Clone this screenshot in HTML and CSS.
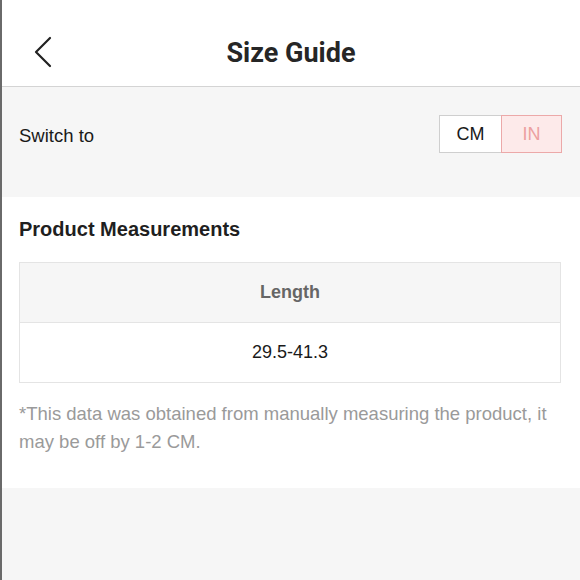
FILE: index.html
```html
<!DOCTYPE html>
<html>
<head>
<meta charset="utf-8">
<link rel="stylesheet" href="styles.css">
</head>
<body>
<div class="page">
  <header class="topbar">
    <span class="back">
      <svg width="20" height="32" viewBox="0 0 20 32"><path d="M17 2 L3 16 L17 30" fill="none" stroke="#222" stroke-width="2.2" stroke-linecap="round" stroke-linejoin="round"/></svg>
    </span>
    <h1 class="title">Size Guide</h1>
  </header>
  <section class="switch">
    <span class="switch-label">Switch to</span>
    <div class="toggle">
      <span class="opt">CM</span>
      <span class="opt active">IN</span>
    </div>
  </section>
  <section class="content">
    <h2 class="heading">Product Measurements</h2>
    <div class="table">
      <div class="th">Length</div>
      <div class="td">29.5-41.3</div>
    </div>
    <p class="note">*This data was obtained from manually measuring the product, it may be off by 1-2 CM.</p>
  </section>
  <div class="rest"></div>
</div>
</body>
</html>
```
FILE: styles.css
```css
html, body { margin: 0; padding: 0; }
body { background: #f6f6f6; font-family: "Liberation Sans", Arial, sans-serif; }
.page { border-left: 2px solid #6a6a6a; min-height: 580px; box-sizing: border-box; display: flex; flex-direction: column; }
.topbar { height: 86px; background: #fff; border-bottom: 1px solid #d4d4d4; display: flex; align-items: flex-start; justify-content: center; position: relative; }
.back { position: absolute; left: 31px; top: 36px; display: flex; }
.title { margin: 0; font-family: Roboto, "Liberation Sans", sans-serif; font-weight: 700; font-size: 27px; line-height: 32px; color: #262626; padding-top: 37px; }
.switch { height: 110px; background: #f6f6f6; display: flex; align-items: flex-start; justify-content: space-between; padding: 0 18px 0 17px; box-sizing: border-box; }
.switch-label { font-size: 18.5px; color: #1a1a1a; margin-top: 38px; }
.toggle { display: flex; margin-top: 28px; }
.opt { width: 60px; height: 36px; display: flex; align-items: center; justify-content: center; font-size: 18px; box-sizing: content-box; }
.opt:first-child { border: 1px solid #cfcfcf; border-right: none; background: #fff; color: #1a1a1a; width: 61px; }
.opt.active { border: 1px solid #eca9a9; background: #fdeaea; color: #eca0a0; width: 59px; }
.content { background: #fff; padding: 19px 19px 32px 17px; }
.heading { margin: 0; font-size: 20px; font-weight: 700; color: #1f1f1f; line-height: 26px; }
.table { margin-top: 20px; border: 1px solid #e4e4e4; }
.th { height: 59px; background: #f6f6f6; border-bottom: 1px solid #e4e4e4; display: flex; align-items: center; justify-content: center; font-size: 18px; font-weight: 700; color: #666; }
.td { height: 59px; display: flex; align-items: center; justify-content: center; font-size: 18px; color: #1a1a1a; }
.note { margin: 17px 0 0; font-size: 18.5px; line-height: 28px; color: #9a9a9a; }
.rest { flex: 1; background: #f6f6f6; }
```
